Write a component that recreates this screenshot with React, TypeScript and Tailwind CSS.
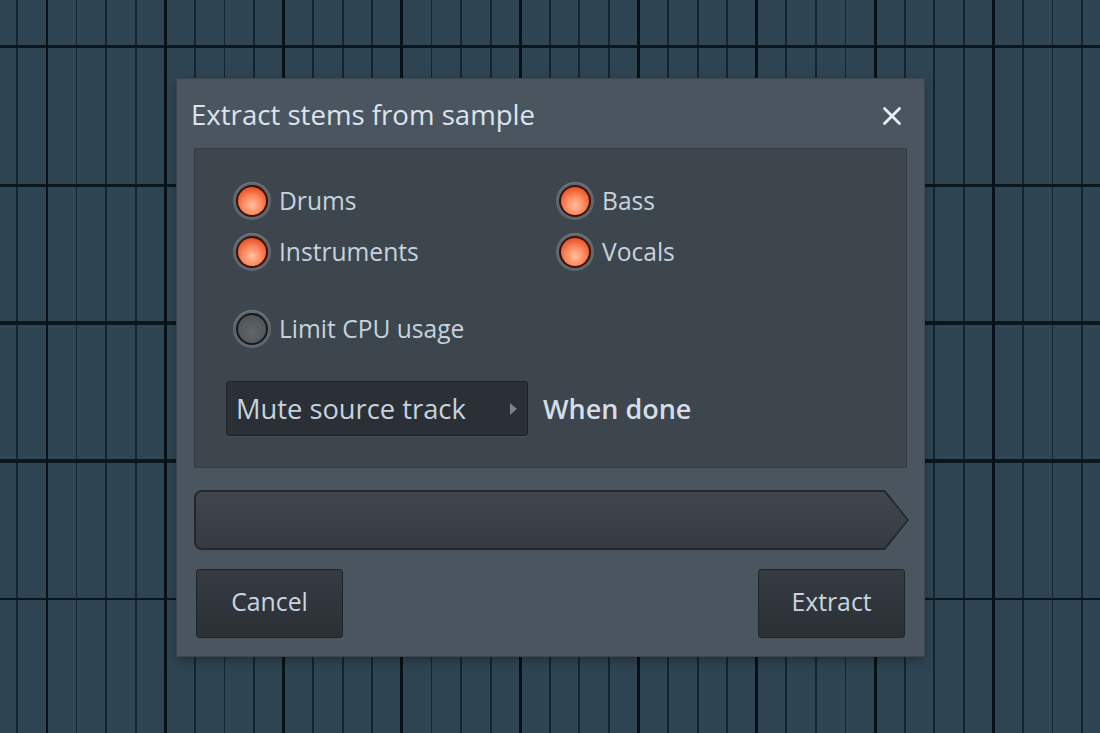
import { X } from "lucide-react";

const font = { fontFamily: '"Open Sans", "Noto Sans", sans-serif' };

const Radio = ({ label, on }: { label: string; on: boolean }) => {
  return (
    <div className="flex items-center gap-[8px] h-[38px]">
      <div className="w-[38px] h-[38px] rounded-full bg-[#5f666d] p-[3px] shadow-[inset_0_1px_1px_rgba(255,255,255,0.15)]">
        {on ? (
          <div className="w-full h-full rounded-full bg-[#3a1208] p-[2px]">
            <div className="w-full h-full rounded-full bg-[radial-gradient(circle_at_50%_65%,#ffc2a0_0%,#ff8a60_40%,#e8562e_75%,#b83a1c_100%)]" />
          </div>
        ) : (
          <div className="w-full h-full rounded-full bg-[#15191c] p-[2px]">
            <div className="w-full h-full rounded-full bg-[radial-gradient(circle_at_50%_60%,#61666b_0%,#53585d_60%,#44494e_100%)]" />
          </div>
        )}
      </div>
      <span className="text-[24.6px] text-[#c6d3de] leading-none">{label}</span>
    </div>
  );
};

const App = () => {
  return (
    <div
      className="w-[1100px] h-[733px] overflow-hidden pt-[79px] pl-[177px] bg-[#2f4553] [background-image:repeating-linear-gradient(90deg,transparent_0_45.5px,#091218_45.5px_48.5px,transparent_48.5px_118.3px),repeating-linear-gradient(180deg,transparent_0_45.5px,#0b161d_45.5px_48.5px,transparent_48.5px_138px),repeating-linear-gradient(90deg,transparent_0_16.5px,#142530_16.5px_18.3px,transparent_18.3px_29.575px)]"
      style={font}
    >
      <div className="w-[747px] h-[577px] bg-[#4a5560] flex flex-col shadow-[0_0_0_1px_#3c4650,0_4px_12px_rgba(0,0,0,0.35)]">
        <div className="h-[69px] flex items-center justify-between pl-[14px] pr-[17px]">
          <h1 className="text-[27.6px] text-[#dbe4ec] leading-none pt-[2px]">Extract stems from sample</h1>
          <X className="w-[30px] h-[30px] text-[#e8eef3] mt-[4px]" strokeWidth={2.2} />
        </div>

        <div className="mx-[17px] h-[320px] bg-[#3d454d] border border-[#353c43] flex flex-col pl-[38px] pt-[33px]">
          <div className="grid grid-cols-[323px_1fr] gap-y-[13px]">
            <Radio label="Drums" on />
            <Radio label="Bass" on />
            <Radio label="Instruments" on />
            <Radio label="Vocals" on />
          </div>
          <div className="mt-[39px]">
            <Radio label="Limit CPU usage" on={false} />
          </div>
          <div className="mt-[33px] -ml-[7px] flex items-center gap-[15px]">
            <div className="w-[302px] h-[55px] rounded-[3px] bg-[#2a3035] border border-[#1d2226] shadow-[0_1px_0_rgba(255,255,255,0.06)] flex items-center justify-between pl-[9px] pr-[10px]">
              <span className="text-[27.3px] text-[#c6d3de] leading-none">Mute source track</span>
              <span className="w-0 h-0 border-y-[6px] border-y-transparent border-l-[7px] border-l-[#7b848c]" />
            </div>
            <span className="text-[27px] text-[#d3dee7] font-semibold leading-none">When done</span>
          </div>
        </div>

        <div className="mt-[22px] ml-[17px] w-[715px] h-[60px] bg-[#22282d] [clip-path:polygon(0_0,calc(100%-24px)_0,100%_50%,calc(100%-24px)_100%,0_100%)] rounded-l-[8px] p-[2px]">
          <div className="w-full h-full rounded-l-[6px] bg-[linear-gradient(180deg,#40464c,#363b41)] [clip-path:polygon(0_0,calc(100%-23px)_0,100%_50%,calc(100%-23px)_100%,0_100%)]" />
        </div>

        <div className="mt-[19px] mx-[19px] flex justify-between">
          <button className="w-[147px] h-[69px] pb-[4px] rounded-[3px] bg-[linear-gradient(180deg,#353b41,#2b3035)] border border-[#1f2428] text-[24.8px] text-[#c9d6e0]">
            Cancel
          </button>
          <button className="w-[147px] h-[69px] pb-[4px] rounded-[3px] bg-[linear-gradient(180deg,#353b41,#2b3035)] border border-[#1f2428] text-[24.8px] text-[#c9d6e0]">
            Extract
          </button>
        </div>
      </div>
    </div>
  );
};

export default App;
